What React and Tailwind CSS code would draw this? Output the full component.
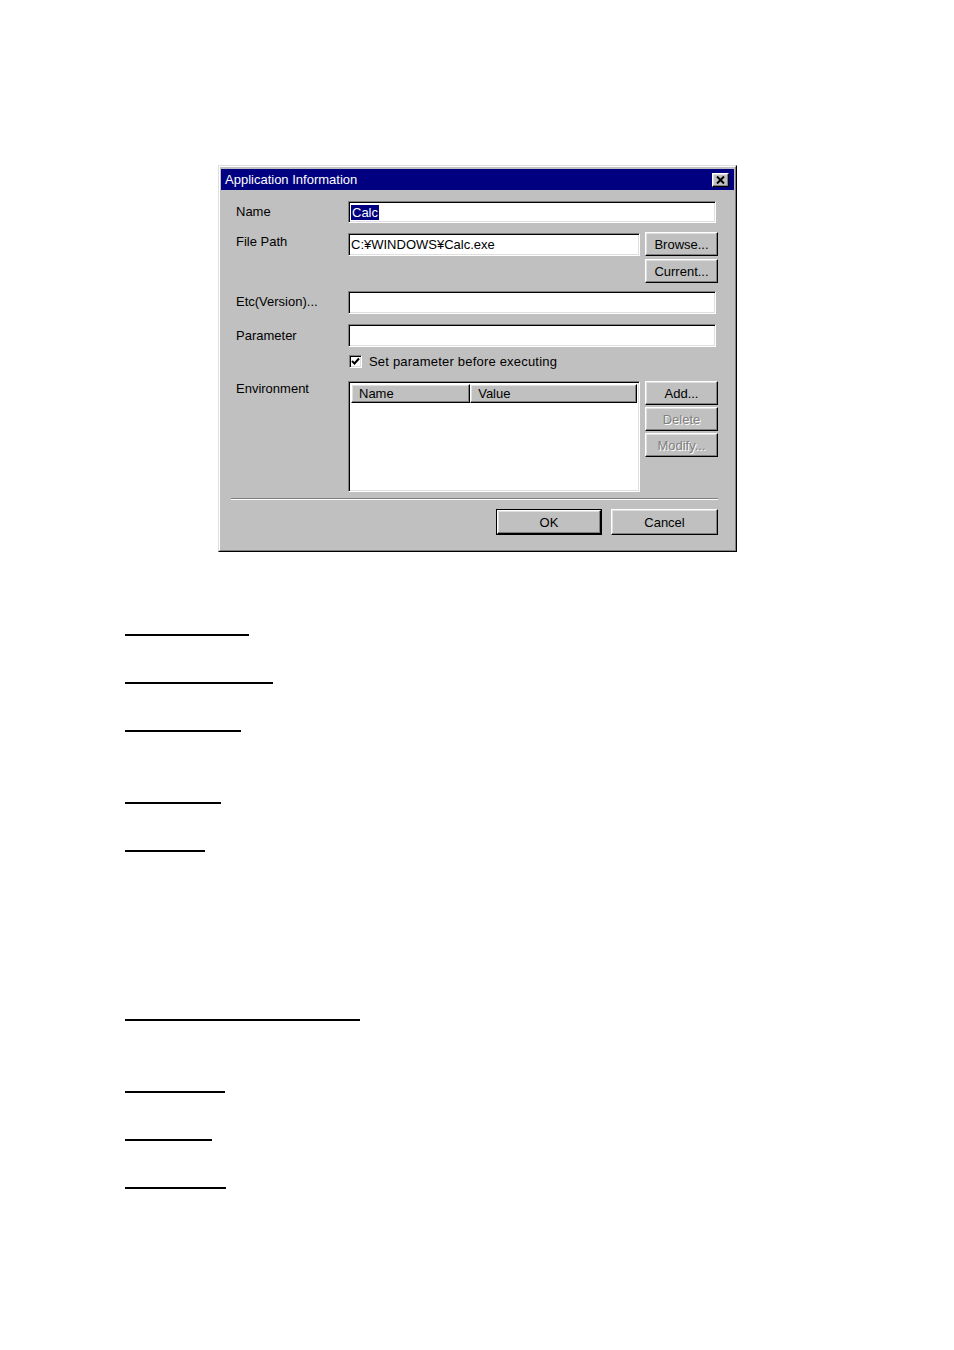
import React from "react";

const raised =
  "border border-t-white border-l-white border-r-black border-b-black shadow-[inset_-1px_-1px_0_#808080,inset_1px_1px_0_#dfdfdf] bg-[#c0c0c0]";
const sunken =
  "border border-t-[#808080] border-l-[#808080] border-r-white border-b-white shadow-[inset_1px_1px_0_#000,inset_-1px_-1px_0_#dfdfdf] bg-white";

function Btn({ children, w = "w-[73px]", h = "h-[24px]", disabled = false }) {
  return (
    <div
      className={`${raised} ${w} ${h} flex items-center justify-center text-[13px] leading-[15px] ${
        disabled ? "text-[#808080] [text-shadow:1px_1px_0_#fff]" : "text-black"
      }`}
    >
      {children}
    </div>
  );
}

function Label({ children, pt }) {
  return <div className={`w-[112px] shrink-0 text-[13px] leading-[15px] text-black ${pt}`}>{children}</div>;
}

function Line({ w, mt }) {
  return <div className={`h-[2px] bg-black ml-[125px] ${w} ${mt}`} />;
}

export default function App() {
  return (
    <div className="min-h-[1350px] w-full bg-white font-['Liberation_Sans',Arial,sans-serif]">
      <div className="pt-[165px] pl-[218px]">
        <div className="w-[519px] border border-t-[#dfdfdf] border-l-[#dfdfdf] border-r-black border-b-black bg-[#c0c0c0]">
          <div className="border border-t-white border-l-white border-r-[#808080] border-b-[#808080] pt-[2px] px-[1px] pb-[15px]">
            {/* Title bar */}
            <div className="h-[21px] bg-[#000080] flex items-center justify-between pl-[4px] pr-[5px]">
              <span className="text-white text-[13px] leading-[15px]">Application Information</span>
              <div className={`${raised} w-[17px] h-[14px] flex items-center justify-center`}>
                <svg width="9" height="8" viewBox="0 0 9 8">
                  <path d="M1 0.5 L8 7.5 M8 0.5 L1 7.5" stroke="#000" strokeWidth="2" fill="none" />
                </svg>
              </div>
            </div>

            <div className="pl-[15px]">
              {/* Name */}
              <div className="flex mt-[11px]">
                <Label pt="pt-[3px]">Name</Label>
                <div className={`${sunken} w-[368px] h-[22px] flex items-center pl-[2px]`}>
                  <span className="bg-[#000080] text-white text-[13px] leading-[15px] px-[1px]">Calc</span>
                </div>
              </div>

              {/* File Path */}
              <div className="flex items-start mt-[9px]">
                <Label pt="pt-[2px]">File Path</Label>
                <div className={`${sunken} w-[292px] h-[23px] mt-[1px] flex items-center pl-[2px] text-[13px] leading-[15px]`}>
                  C:¥WINDOWS¥Calc.exe
                </div>
                <div className="ml-[5px]">
                  <Btn>Browse...</Btn>
                </div>
              </div>

              {/* Current */}
              <div className="flex mt-[3px] pl-[409px]">
                <Btn>Current...</Btn>
              </div>

              {/* Etc */}
              <div className="flex mt-[8px]">
                <Label pt="pt-[3px]">Etc(Version)...</Label>
                <div className={`${sunken} w-[368px] h-[23px]`} />
              </div>

              {/* Parameter */}
              <div className="flex mt-[10px]">
                <Label pt="pt-[4px]">Parameter</Label>
                <div className={`${sunken} w-[368px] h-[23px]`} />
              </div>

              {/* Checkbox */}
              <div className="flex mt-[8px] h-[13px] items-center">
                <div className="w-[113px] shrink-0" />
                <div className={`${sunken} w-[13px] h-[13px] flex items-center justify-center`}>
                  <svg width="9" height="9" viewBox="0 0 9 9">
                    <path d="M1 4 L3.5 6.5 L8 1.5" stroke="#000" strokeWidth="2" fill="none" />
                  </svg>
                </div>
                <span className="ml-[7px] text-[13px] leading-[15px] tracking-[0.2px]">Set parameter before executing</span>
              </div>

              {/* Environment */}
              <div className="flex items-start mt-[13px]">
                <Label pt="pt-[0px]">Environment</Label>
                <div className={`${sunken} w-[292px] h-[111px] p-[2px] flex flex-col`}>
                  <div className="flex h-[19px]">
                    <div className={`${raised} w-[120px] h-[19px] flex items-center pl-[7px] text-[13px] leading-[15px]`}>Name</div>
                    <div className={`${raised} w-[168px] h-[19px] flex items-center pl-[7px] text-[13px] leading-[15px]`}>Value</div>
                  </div>
                </div>
                <div className="ml-[5px] flex flex-col gap-[2px]">
                  <Btn>Add...</Btn>
                  <Btn disabled>Delete</Btn>
                  <Btn disabled>Modify...</Btn>
                </div>
              </div>
            </div>

            {/* Separator */}
            <div className="ml-[10px] w-[487px] mt-[6px] h-[2px] border-t border-t-[#808080] border-b border-b-white" />

            {/* OK / Cancel */}
            <div className="flex justify-end gap-[9px] mt-[9px] pr-[16px]">
              <div className="border border-black">
                <Btn w="w-[104px]" h="h-[24px]">OK</Btn>
              </div>
              <Btn w="w-[107px]" h="h-[26px]">Cancel</Btn>
            </div>
          </div>
        </div>
      </div>

      <Line w="w-[124px]" mt="mt-[82px]" />
      <Line w="w-[148px]" mt="mt-[46px]" />
      <Line w="w-[116px]" mt="mt-[46px]" />
      <Line w="w-[96px]" mt="mt-[70px]" />
      <Line w="w-[80px]" mt="mt-[46px]" />
      <Line w="w-[235px]" mt="mt-[167px]" />
      <Line w="w-[100px]" mt="mt-[70px]" />
      <Line w="w-[87px]" mt="mt-[46px]" />
      <Line w="w-[101px]" mt="mt-[46px]" />
    </div>
  );
}
